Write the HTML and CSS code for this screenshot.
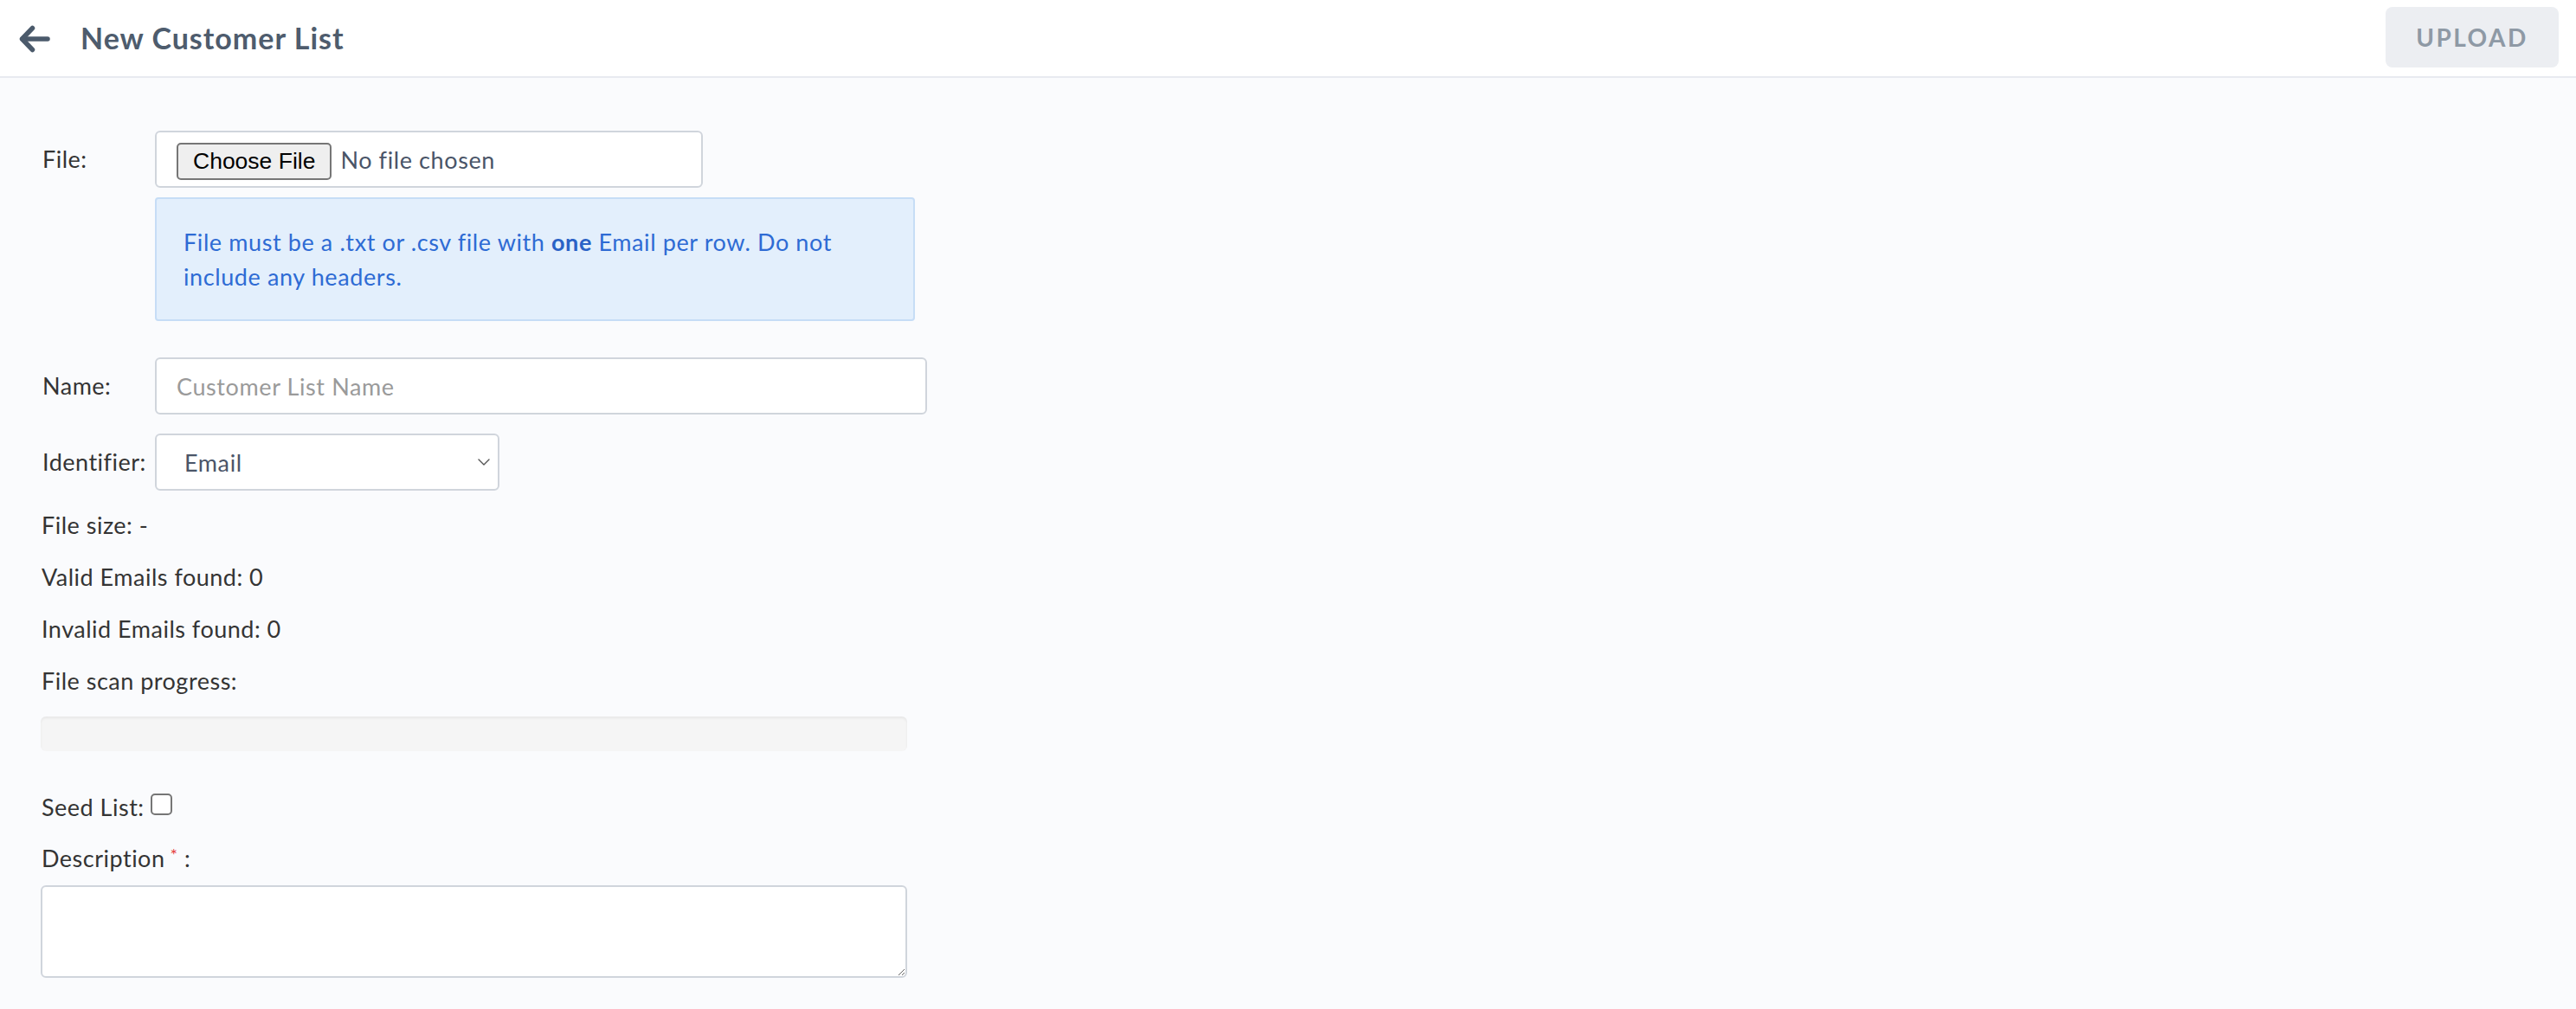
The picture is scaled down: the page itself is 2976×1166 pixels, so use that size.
FILE: index.html
```html
<!DOCTYPE html>
<html lang="en">
<head>
<meta charset="utf-8">
<title>New Customer List</title>
<link rel="stylesheet" href="styles.css">
</head>
<body>
<header class="topbar">
  <div class="topbar-left">
    <a class="back" href="#" aria-label="Back">
      <svg width="36" height="32" viewBox="0 0 36 32" fill="none" stroke="currentColor" stroke-width="5.5" stroke-linecap="round" stroke-linejoin="round"><path d="M33 16H4"/><path d="M15.5 3.5L3.5 16L15.5 28.5"/></svg>
    </a>
    <h1 class="title">New Customer List</h1>
  </div>
  <button class="upload-btn" type="button" disabled>UPLOAD</button>
</header>
<main class="content">
  <div class="form-row file-row">
    <label class="row-label" for="file">File:</label>
    <div class="field">
      <input id="file" class="file-input" type="file">
      <p class="info-box"><span>File must be a .txt or .csv file with </span><strong>one</strong><span> Email per row. Do not </span><span>include any headers.</span></p>
    </div>
  </div>
  <div class="form-row name-row">
    <label class="row-label" for="name">Name:</label>
    <input id="name" class="text-input" type="text" placeholder="Customer List Name">
  </div>
  <div class="form-row id-row">
    <label class="row-label" for="ident">Identifier:</label>
    <div class="select-wrap">
      <select id="ident" class="select">
        <option>Email</option>
      </select>
      <svg class="chevron" width="16" height="10" viewBox="0 0 16 10" fill="none" stroke="#555" stroke-width="1.4" stroke-linecap="round" stroke-linejoin="round"><path d="M2 2L8 8L14 2"/></svg>
    </div>
  </div>
  <div class="stats">
    <p class="stat">File size: -</p>
    <p class="stat">Valid Emails found: 0</p>
    <p class="stat">Invalid Emails found: 0</p>
    <p class="stat">File scan progress:</p>
  </div>
  <div class="progress"><div class="progress-bar" style="width: 0%"></div></div>
  <div class="seed-row">
    <label for="seed">Seed List:</label>
    <input id="seed" class="checkbox" type="checkbox">
  </div>
  <label class="desc-label" for="desc">Description<span class="req">*</span> :</label>
  <textarea id="desc" class="textarea"></textarea>
</main>
</body>
</html>
```
FILE: styles.css
```css
* { box-sizing: border-box; }
html, body { margin: 0; padding: 0; }
body {
  font-family: Lato, "Noto Sans", sans-serif;
  font-size: 27px;
  line-height: 40px;
  letter-spacing: 0.5px;
  color: #343434;
  background: #fafbfd;
  min-height: 1166px;
}
.topbar {
  height: 90px;
  background: #ffffff;
  border-bottom: 2px solid #e8eaf0;
  display: flex;
  align-items: center;
  justify-content: space-between;
  padding: 0 20px 0 22px;
}
.topbar-left { display: flex; align-items: center; }
.back {
  display: flex;
  color: #4b5a6b;
  margin-top: 2px;
}
.title {
  margin: 0 0 0 35px;
  font-size: 34px;
  font-weight: 700;
  letter-spacing: 1px;
  color: #4e5c6d;
  line-height: 40px;
}
.upload-btn {
  width: 200px;
  height: 70px;
  margin-top: -2px;
  border: 0;
  border-radius: 8px;
  background: #eceef2;
  color: #8e99a5;
  font-family: Lato, "Noto Sans", sans-serif;
  font-size: 28px;
  font-weight: 700;
  letter-spacing: 2.5px;
  padding: 0;
}
.content {
  padding: 61px 47px 20px;
}
.form-row { display: flex; align-items: center; }
.file-row { align-items: flex-start; }
.row-label {
  width: 132px;
  flex: none;
  padding-left: 2px;
}
.file-row .row-label { line-height: 66px; }
.field { display: flex; flex-direction: column; }
.file-input {
  display: block;
  width: 633px;
  height: 66px;
  padding: 12px 23px 0;
  border: 2px solid #d0d5dc;
  border-radius: 6px;
  background: #fff;
  font-family: Lato, "Noto Sans", sans-serif;
  font-size: 27px;
  letter-spacing: 0.6px;
  color: #4a5568;
}
.file-input::file-selector-button {
  font-family: "Liberation Sans", Arial, sans-serif;
  font-size: 26.5px;
  letter-spacing: 0;
  color: #000;
  height: 43px;
  padding: 0 17px;
  margin: 0 10px 0 0;
  background: #efefef;
  border: 2px solid #767676;
  border-radius: 5px;
}
.info-box {
  margin: 11px 0 0;
  width: 878px;
  padding: 30px 31px 29px;
  background: #e3effc;
  border: 2px solid #c6ddf6;
  border-radius: 4px;
  color: #2e6bd4;
  letter-spacing: 0.6px;
}
.info-box strong { font-weight: 700; color: #2a62c6; }
.name-row { margin-top: 42px; }
.text-input {
  width: 892px;
  height: 66px;
  padding: 0 23px;
  border: 2px solid #d0d5dc;
  border-radius: 6px;
  background: #fff;
  font-family: Lato, "Noto Sans", sans-serif;
  font-size: 27px;
  letter-spacing: 0.6px;
  color: #4a5568;
  outline: none;
}
.text-input::placeholder { color: #9a9a9a; }
.id-row { margin-top: 22px; }
.select-wrap { position: relative; }
.select {
  appearance: none;
  -webkit-appearance: none;
  display: block;
  width: 398px;
  height: 66px;
  padding: 0 40px 0 32px;
  border: 2px solid #d0d5dc;
  border-radius: 6px;
  background: #fff;
  font-family: Lato, "Noto Sans", sans-serif;
  font-size: 27px;
  letter-spacing: 0.6px;
  color: #4a5568;
}
.chevron {
  position: absolute;
  right: 10px;
  top: 28px;
  pointer-events: none;
}
.stats { margin-top: 20px; }
.stat { margin: 0 0 20px; padding-left: 1px; }
.stat:last-child { margin-bottom: 21px; }
.progress {
  width: 1001px;
  height: 40px;
  background: #f5f5f5;
  border-radius: 6px;
  box-shadow: inset 0 2px 3px rgba(0, 0, 0, 0.06);
  overflow: hidden;
}
.progress-bar { height: 100%; background: #3b82f6; }
.seed-row {
  margin-top: 45px;
  display: flex;
  align-items: flex-start;
  padding-left: 1px;
}
.checkbox {
  appearance: none;
  -webkit-appearance: none;
  width: 25px;
  height: 25px;
  margin: 4px 0 0 7px;
  border: 2px solid #767676;
  border-radius: 5px;
  background: #fff;
}
.desc-label {
  display: block;
  margin-top: 19px;
  padding-left: 1px;
}
.req {
  color: #e53e3e;
  font-size: 20px;
  vertical-align: top;
  line-height: 30px;
  margin-left: 6px;
}
.textarea {
  display: block;
  margin-top: 11px;
  width: 1001px;
  height: 107px;
  border: 2px solid #d0d5dc;
  border-radius: 6px;
  background: #fff;
  font-family: Lato, "Noto Sans", sans-serif;
  font-size: 27px;
  resize: vertical;
}
```
